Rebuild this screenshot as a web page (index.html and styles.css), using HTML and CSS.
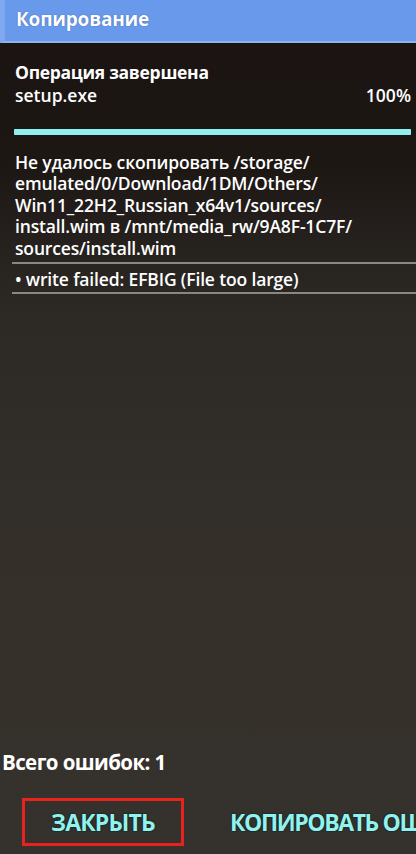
FILE: index.html
```html
<!DOCTYPE html>
<html lang="ru">
<head>
  <meta charset="UTF-8" />
  <meta name="viewport" content="width=device-width, initial-scale=1.0" />
  <title>Копирование</title>
  <link rel="stylesheet" href="styles.css">
</head>
<body>
  <div class="dialog">
    <div class="dialog-title">Копирование</div>

    <div class="status">
      <div class="status-head">Операция завершена</div>
      <div class="status-row">
        <span>setup.exe</span>
        <span>100%</span>
      </div>
      <div class="progress"><div class="progress-fill" style="width: 100%"></div></div>
    </div>

    <div class="error-text">Не удалось скопировать /storage/<br>emulated/0/Download/1DM/Others/<br>Win11_22H2_Russian_x64v1/sources/<br>install.wim в /mnt/media_rw/9A8F-1C7F/<br>sources/install.wim</div>
    <div class="error-item">• write failed: EFBIG (File too large)</div>

    <div class="spacer"></div>

    <div class="total">Всего ошибок: 1</div>
    <div class="buttons">
      <div class="btn btn-marked">ЗАКРЫТЬ</div>
      <div class="btn btn-copy">КОПИРОВАТЬ ОШИБКИ</div>
    </div>
  </div>
</body>
</html>
```

FILE: styles.css
```css
* { box-sizing: border-box; margin: 0; padding: 0; }
body {
  font-family: "Open Sans", Roboto, sans-serif;
  background: #2a2622;
  color: #fff;
  width: 416px;
  height: 854px;
  overflow: hidden;
}
.dialog {
  height: 854px;
  display: flex;
  flex-direction: column;
  background: linear-gradient(#1a1311 0px, #1d1714 160px, #2d2a26 320px, #35302a 600px, #35312c 854px);
}

.dialog-title {
  height: 43px;
  background: #6899ea;
  border-left: 5px solid #7ea9ee;
  border-bottom: 2px solid #8fb3ee;
  padding: 6px 0 0 11px;
  font-size: 19px;
  font-weight: bold;
  letter-spacing: -0.2px;
  text-shadow: 0 0 1px #2a4a90;
}

.status { padding: 17.5px 5px 0 15px; }
.status-head {
  font-size: 17.5px;
  font-weight: bold;
  letter-spacing: -0.3px;
  line-height: 23px;
}
.status-row {
  display: flex;
  justify-content: space-between;
  font-size: 17.5px;
  font-weight: 600;
  line-height: 23px;
}
.progress {
  margin: 22.5px 0 0 -1px;
  height: 6px;
  background: #3a4748;
}
.progress-fill {
  height: 100%;
  background: #8ff0ef;
  border-radius: 1px;
}

.error-text {
  margin-top: 16.5px;
  padding: 0 0 3px 15px;
  font-size: 17.5px;
  font-weight: 600;
  letter-spacing: -0.15px;
  line-height: 21.5px;
  white-space: nowrap;
}
.error-item {
  margin-left: 12px;
  padding: 5.5px 0 3.5px 3px;
  font-size: 17.5px;
  font-weight: 600;
  letter-spacing: -0.15px;
  line-height: 19px;
  border-top: 2px solid #8a8682;
  border-bottom: 2px solid #8a8682;
}

.spacer { flex: 1; }

.total {
  padding-left: 2px;
  font-size: 20.5px;
  font-weight: bold;
  letter-spacing: -0.6px;
  line-height: 22px;
}
.buttons {
  display: flex;
  gap: 46px;
  padding: 25px 0 8px 22px;
  white-space: nowrap;
  overflow: hidden;
}
.btn {
  flex-shrink: 0;
  height: 48px;
  display: flex;
  align-items: center;
  font-size: 23px;
  font-weight: bold;
  letter-spacing: -0.8px;
  color: #93f2ee;
  text-shadow: 0 0 2px #0a2a2a, 0 0 1px #000;
}
.btn-copy { letter-spacing: -1.4px; }
.btn-marked {
  width: 162px;
  justify-content: center;
  border: 3px solid #e8221c;
}
```
